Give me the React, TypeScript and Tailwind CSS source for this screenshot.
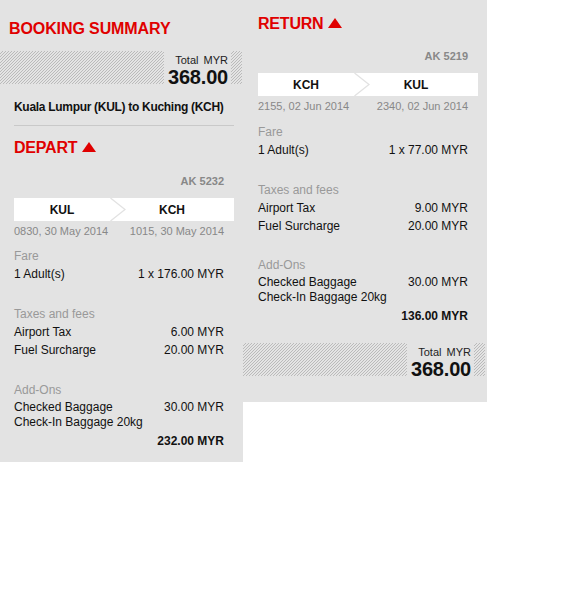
import React from "react";

function Hatch({ w }: { w: string }) {
  return (
    <div className={`h-[33px] ${w}`}>
      <svg width="100%" height="100%" shapeRendering="crispEdges">
        <defs>
          <pattern id="hatchp" width="3" height="3" patternUnits="userSpaceOnUse">
            <rect width="3" height="3" fill="#e4e4e4" />
            <rect x="0" y="2" width="1" height="1" fill="#bababa" />
            <rect x="1" y="1" width="1" height="1" fill="#bababa" />
            <rect x="2" y="0" width="1" height="1" fill="#bababa" />
          </pattern>
        </defs>
        <rect width="100%" height="100%" fill="url(#hatchp)" />
      </svg>
    </div>
  );
}

function TotalStrip({ mt }: { mt: string }) {
  return (
    <div className={`${mt} flex w-[242px] items-start`}>
      <Hatch w="flex-1" />
      <div className="w-[67px] pt-[3px] pr-[3px] text-right text-[#111]">
        <div className="text-[11px] leading-[13px] text-[#222]">
          Total <span className="ml-[2px]">MYR</span>
        </div>
        <div className="text-[20px] leading-[21px] font-bold tracking-[-0.2px]">368.00</div>
      </div>
      <Hatch w="w-[11px]" />
    </div>
  );
}

function Row({ l, r }: { l: string; r: string }) {
  return (
    <div className="flex justify-between">
      <span>{l}</span>
      <span>{r}</span>
    </div>
  );
}

type LegProps = {
  title: string;
  flight: string;
  from: string;
  to: string;
  dep: string;
  arr: string;
  fare: string;
  tax: string;
  fuel: string;
  total: string;
  akMt: string;
  fareMt: string;
  addMt: string;
};

function Leg(p: LegProps) {
  return (
    <div>
      <div className="flex items-start gap-[5px] text-[16px] leading-[20px] font-bold tracking-[-0.2px] text-[#e00000]">
        <span>{p.title}</span>
        <svg className="mt-[4px] shrink-0" width="14" height="10" viewBox="0 0 14 10">
          <polygon points="7,0 14,10 0,10" fill="#e00000" />
        </svg>
      </div>
      <div className={`${p.akMt} pr-[10px] text-right text-[11px] leading-[13px] font-bold text-[#888]`}>
        {p.flight}
      </div>
      <div className="mt-[10px] flex h-[23px] bg-white text-[12px] leading-[25px] font-bold text-[#111]">
        <div className="w-[96px] text-center">{p.from}</div>
        <svg className="shrink-0" width="16" height="23" viewBox="0 0 16 23">
          <polyline points="0.5,0 15,11.5 0.5,23" fill="none" stroke="#e2e2e2" strokeWidth="1.3" />
        </svg>
        <div className="flex-1 pr-[16px] text-center">{p.to}</div>
      </div>
      <div className="mt-[4px] flex justify-between pr-[10px] text-[11px] leading-[13px] text-[#888]">
        <span>{p.dep}</span>
        <span>{p.arr}</span>
      </div>
      <div className={`${p.fareMt} pr-[10px] text-[12px] leading-[18px] text-[#111]`}>
        <div className="text-[#999]">Fare</div>
        <Row l="1 Adult(s)" r={p.fare} />
        <div className="mt-[22px] text-[#999]">Taxes and fees</div>
        <Row l="Airport Tax" r={p.tax} />
        <Row l="Fuel Surcharge" r={p.fuel} />
        <div className={`${p.addMt} text-[#999]`}>Add-Ons</div>
        <div className="mt-[1px] leading-[15px]">
          <Row l="Checked Baggage" r="30.00 MYR" />
          <div>Check-In Baggage 20kg</div>
        </div>
        <div className="mt-[2px] text-right font-bold">{p.total}</div>
      </div>
    </div>
  );
}

export default function App() {
  return (
    <div className="flex items-start font-[family-name:'Liberation_Sans',Arial,sans-serif]">
      <div className="w-[243px] bg-[#e3e3e3] pt-[19px] pb-[12px]">
        <h2 className="pl-[9px] text-[16px] leading-[20px] font-bold tracking-[-0.1px] text-[#e00000]">
          BOOKING SUMMARY
        </h2>
        <TotalStrip mt="mt-[12px]" />
        <div className="mt-[10px] pl-[14px] pr-[19px] text-[12px] leading-[18px] font-bold tracking-[-0.3px] whitespace-nowrap text-[#111]">
          Kuala Lumpur (KUL) to Kuching (KCH)
        </div>
        <div className="mt-[9px] ml-[14px] mr-[9px] border-t border-[#c9c9c9]" />
        <div className="mt-[12px] pl-[14px] pr-[9px]">
          <Leg
            title="DEPART"
            flight="AK 5232"
            from="KUL"
            to="KCH"
            dep="0830, 30 May 2014"
            arr="1015, 30 May 2014"
            fare="1 x 176.00 MYR"
            tax="6.00 MYR"
            fuel="20.00 MYR"
            total="232.00 MYR"
            akMt="mt-[17px]"
            fareMt="mt-[9px]"
            addMt="mt-[22px]"
          />
        </div>
      </div>
      <div className="w-[244px] bg-[#e3e3e3] pt-[14px] pb-[22px]">
        <div className="pl-[15px] pr-[9px]">
          <Leg
            title="RETURN"
            flight="AK 5219"
            from="KCH"
            to="KUL"
            dep="2155, 02 Jun 2014"
            arr="2340, 02 Jun 2014"
            fare="1 x 77.00 MYR"
            tax="9.00 MYR"
            fuel="20.00 MYR"
            total="136.00 MYR"
            akMt="mt-[16px]"
            fareMt="mt-[10px]"
            addMt="mt-[21px]"
          />
        </div>
        <TotalStrip mt="mt-[18px]" />
      </div>
    </div>
  );
}
